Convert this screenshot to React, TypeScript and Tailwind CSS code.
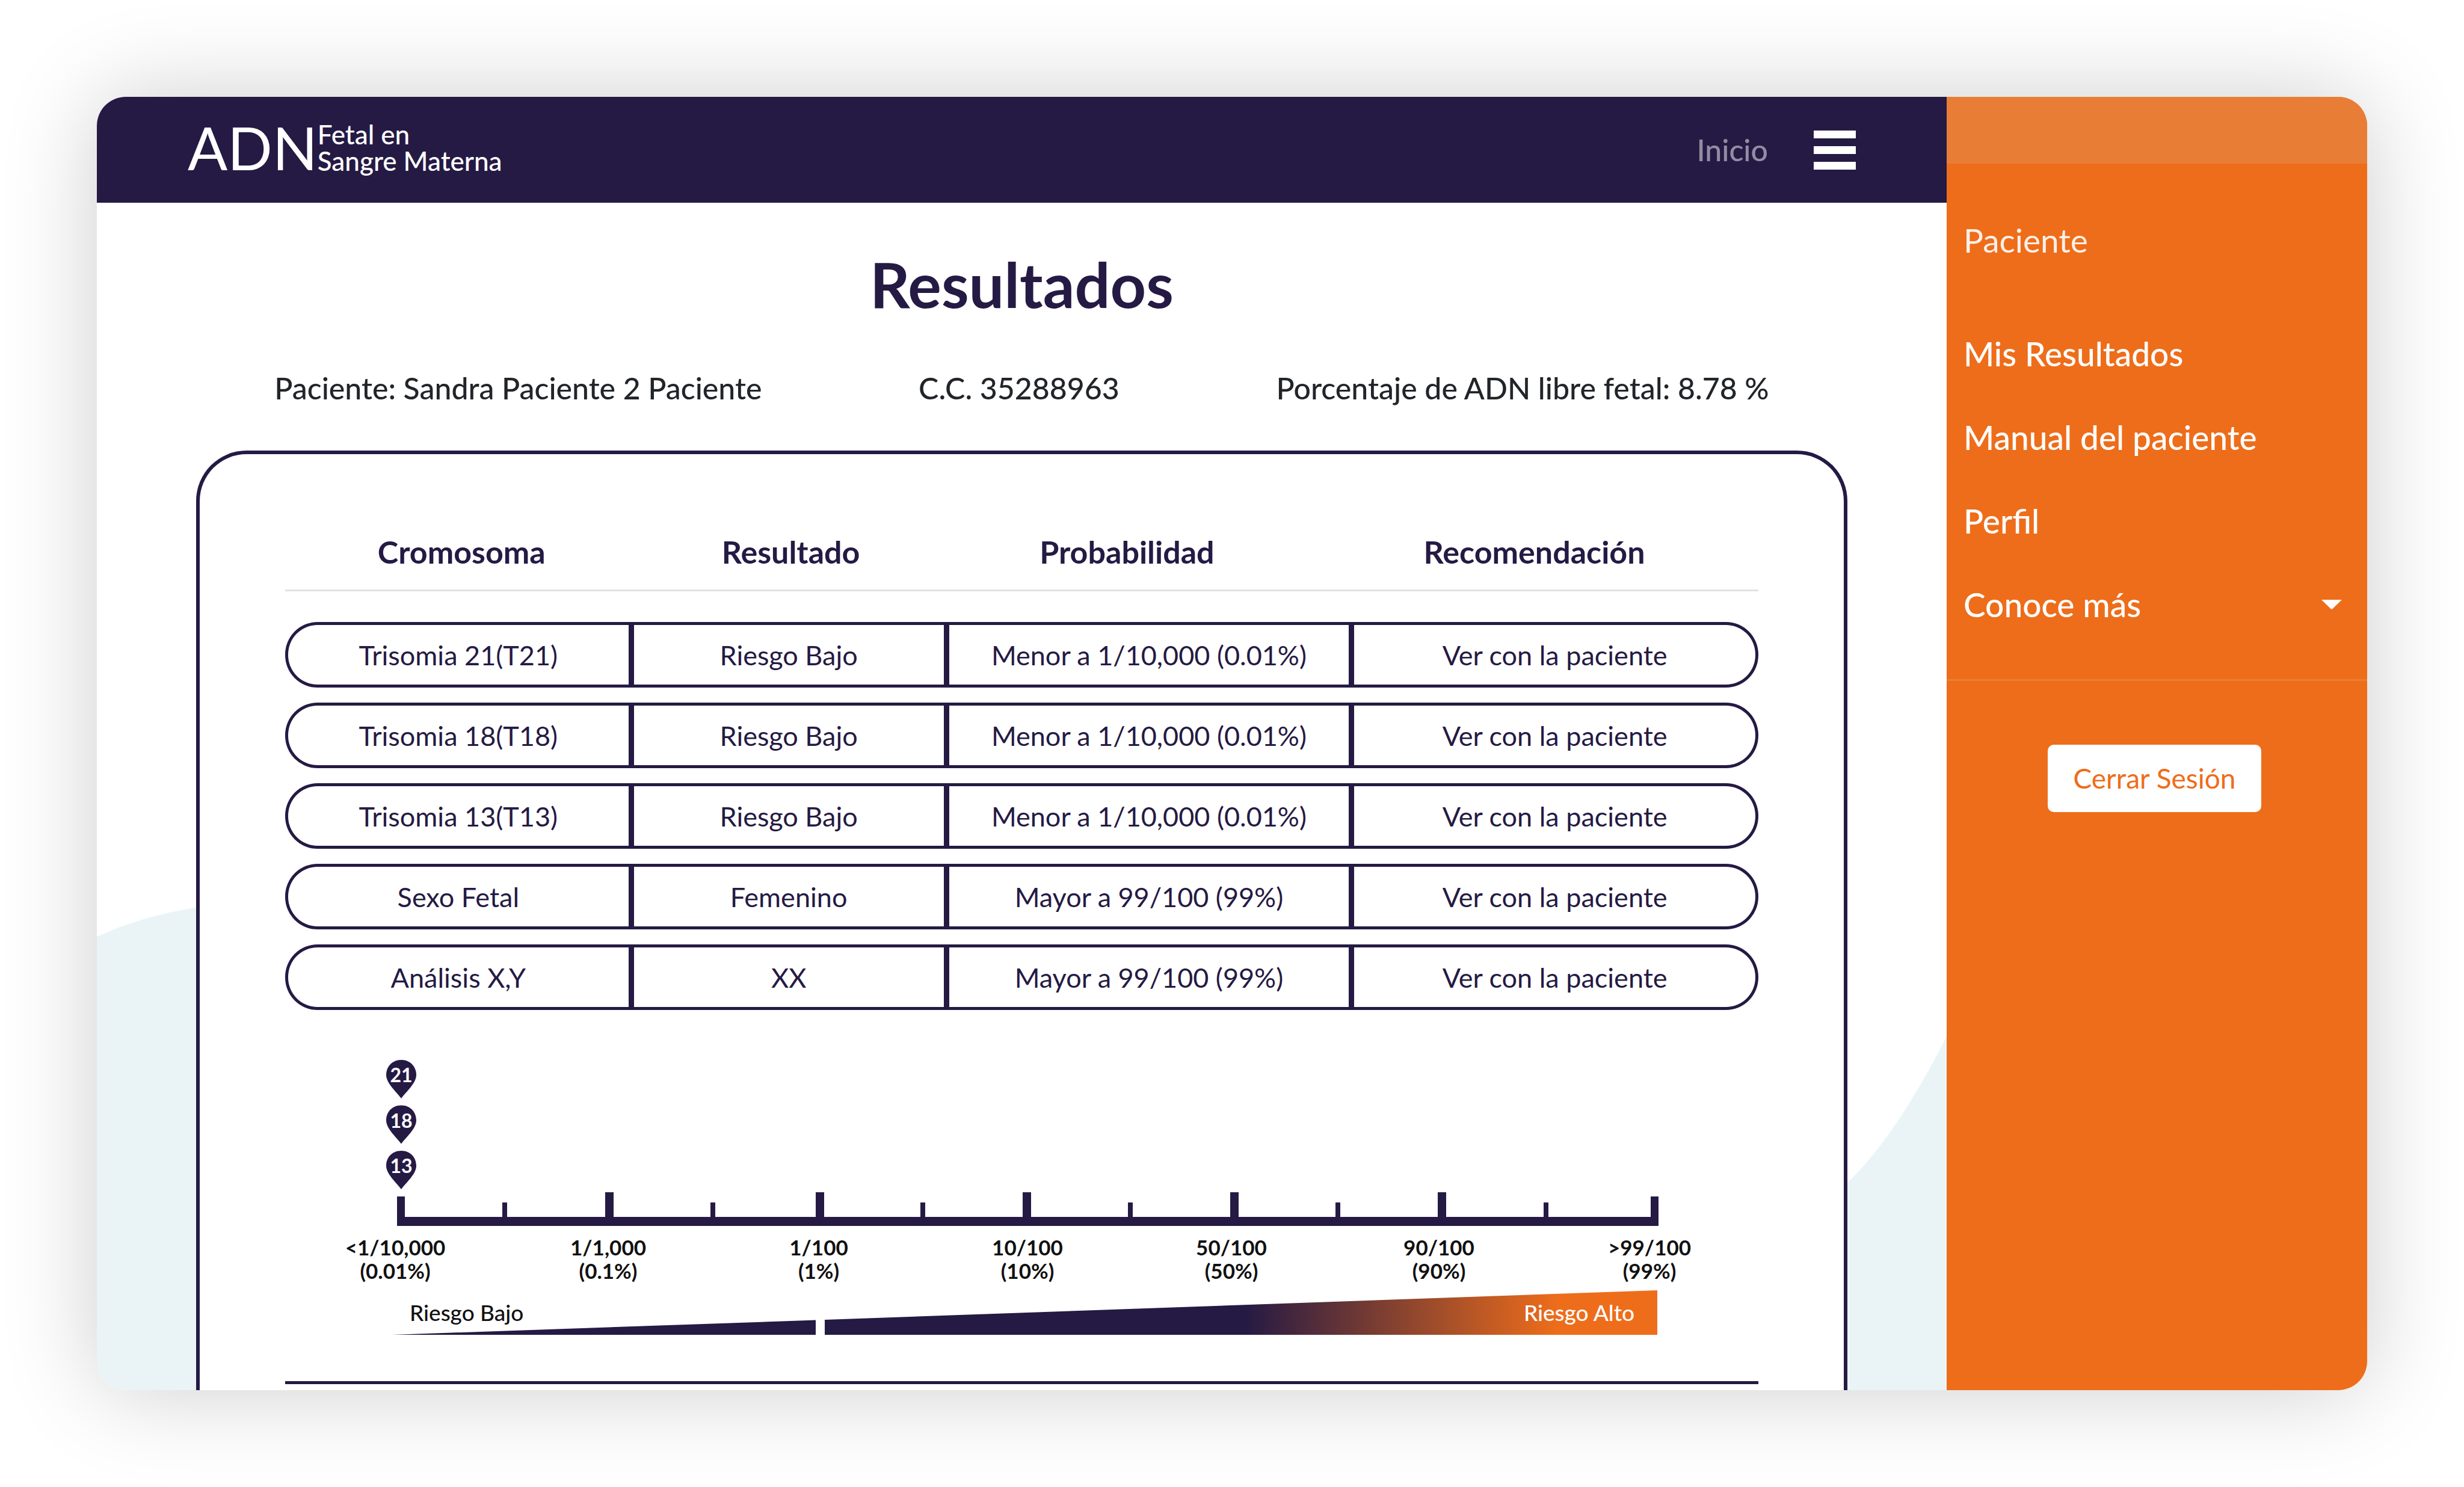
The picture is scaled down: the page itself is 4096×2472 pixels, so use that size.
const results = [
  ["Trisomia 21(T21)", "Riesgo Bajo", "Menor a 1/10,000 (0.01%)", "Ver con la paciente"],
  ["Trisomia 18(T18)", "Riesgo Bajo", "Menor a 1/10,000 (0.01%)", "Ver con la paciente"],
  ["Trisomia 13(T13)", "Riesgo Bajo", "Menor a 1/10,000 (0.01%)", "Ver con la paciente"],
  ["Sexo Fetal", "Femenino", "Mayor a 99/100 (99%)", "Ver con la paciente"],
  ["Análisis X,Y", "XX", "Mayor a 99/100 (99%)", "Ver con la paciente"],
];

const columns = [
  { label: "Cromosoma", layout: "w-[23.3%] pl-4" },
  { label: "Resultado", layout: "w-[21.4%] pl-4" },
  { label: "Probabilidad", layout: "w-[27.5%] pr-16" },
  { label: "Recomendación", layout: "w-[27.8%] pr-16" },
];

const links = ["Mis Resultados", "Manual del paciente", "Perfil"];

const pins = ["21", "18", "13"];
const majorTicks = [539, 889, 1233, 1578, 1923];
const minorTicks = [365, 711, 1060, 1405, 1750, 2096];
const scaleLabels = [
  { x: 183, odds: "<1/10,000", percent: "(0.01%)" },
  { x: 537, odds: "1/1,000", percent: "(0.1%)" },
  { x: 887, odds: "1/100", percent: "(1%)" },
  { x: 1234, odds: "10/100", percent: "(10%)" },
  { x: 1573, odds: "50/100", percent: "(50%)" },
  { x: 1918, odds: "90/100", percent: "(90%)" },
  { x: 2268, odds: ">99/100", percent: "(99%)" },
];

function Header() {
  return (
    <header className="relative flex h-[176px] shrink-0 items-center justify-between bg-[#251a44] px-[151px] text-white">
      <a href="#" className="flex items-center pb-2">
        <span className="text-[98px] leading-[98px]">ADN</span>
        <span className="flex flex-col text-[44px] leading-[44px] font-medium">
          <span>Fetal en</span>
          <span>Sangre Materna</span>
        </span>
      </a>
      <nav className="flex items-center gap-[76px]">
        <a href="#" className="text-[50px] leading-[60px] font-medium text-white/50">
          Inicio
        </a>
        <button type="button" aria-label="Menú" className="flex flex-col gap-[13px]">
          <span className="h-[13px] w-[70px] bg-white" />
          <span className="h-[13px] w-[70px] bg-white" />
          <span className="h-[13px] w-[70px] bg-white" />
        </button>
      </nav>
    </header>
  );
}

function ResultsTable() {
  return (
    <table className="w-full table-fixed border-separate border-spacing-x-0 border-spacing-y-[25px] text-center text-[#251a44]">
      <thead>
        <tr>
          {columns.map((c) => (
            <th
              key={c.label}
              scope="col"
              className={`${c.layout} border-b-[3px] border-[#dee2e6] pb-[33px] text-[52px] leading-[60px] font-bold`}
            >
              {c.label}
            </th>
          ))}
        </tr>
      </thead>
      <tbody className="before:block before:h-px before:content-['']">
        {results.map((row) => (
          <tr key={row[0]}>
            {row.map((cell, i) => (
              <td
                key={i}
                className="h-[109px] border-y-[5px] border-l-[9px] border-[#251a44] text-[45px] leading-[56px] first:rounded-l-[54px] first:border-l-[5px] last:rounded-r-[54px] last:border-r-[5px]"
              >
                {cell}
              </td>
            ))}
          </tr>
        ))}
      </tbody>
    </table>
  );
}

function RiskScale() {
  return (
    <svg viewBox="0 0 2449 592" className="block w-full" role="img" aria-label="Escala de riesgo">
      <defs>
        <linearGradient id="risk" gradientUnits="userSpaceOnUse" x1="1595" y1="0" x2="2116" y2="0">
          <stop offset="0" stopColor="#251a44" />
          <stop offset="1" stopColor="#ee6d1a" />
        </linearGradient>
      </defs>

      {pins.map((pin, i) => (
        <g key={pin} transform={`translate(193 ${58 + i * 75.5})`}>
          <path d="M0 0C15 0 25 11 25 25C25 39 8 53 0 64C-8 53 -25 39 -25 25C-25 11 -15 0 0 0Z" fill="#251a44" />
          <text y="37" textAnchor="middle" fill="#fff" className="text-[32px] font-bold">
            {pin}
          </text>
        </g>
      ))}

      <g fill="#251a44">
        <rect x="186" y="319" width="2097" height="15" />
        <rect x="186" y="285" width="13" height="49" />
        <rect x="2270" y="285" width="13" height="49" />
        {majorTicks.map((x) => (
          <rect key={x} x={x - 7} y="278" width="14" height="50" />
        ))}
        {minorTicks.map((x) => (
          <rect key={x} x={x - 4} y="295" width="8" height="30" />
        ))}
      </g>

      <g textAnchor="middle" fill="#111" className="text-[35px] font-bold">
        {scaleLabels.map((l) => (
          <text key={l.odds} y="383">
            <tspan x={l.x}>{l.odds}</tspan>
            <tspan x={l.x} dy="39">
              {l.percent}
            </tspan>
          </text>
        ))}
      </g>

      <path d="M178 515L882 490.500V515H178Z" fill="#251a44" />
      <path d="M897 490L2281 441V515H897Z" fill="url(#risk)" />
      <text x="207" y="492" fill="#111" className="text-[37px] font-medium">
        Riesgo Bajo
      </text>
      <text x="2243" y="492" textAnchor="end" fill="#fff" className="text-[37px] font-medium">
        Riesgo Alto
      </text>
    </svg>
  );
}

function Sidebar() {
  return (
    <aside className="flex w-[699px] shrink-0 flex-col bg-[#ee6d1a] text-[55px] leading-[64px] text-white">
      <div className="h-[111px] bg-[#e87e35]" />
      <div className="flex h-[246px] items-center px-7 pt-2 text-white/90">Paciente</div>
      <nav className="flex flex-col font-medium">
        {links.map((label) => (
          <a key={label} href="#" className="flex h-[139px] items-center px-7">
            {label}
          </a>
        ))}
        <button type="button" className="flex h-[139px] items-center justify-between pr-[42px] pl-7">
          Conoce más
          <svg viewBox="0 0 34 16" className="h-4 w-[34px]" fill="currentColor" aria-hidden="true">
            <path d="M0 0H34L18.500 15Q17 16 15.500 15Z" />
          </svg>
        </button>
      </nav>
      <div className="mt-[55px] h-[3px] bg-[#e87e35]" />
      <button
        type="button"
        className="mt-[106px] mr-2 h-28 w-[355px] self-center rounded-[10px] bg-white text-[46px] leading-[56px] text-[#ee6d1a]"
      >
        Cerrar Sesión
      </button>
    </aside>
  );
}

export default function App() {
  return (
    <div className="h-screen overflow-hidden bg-white p-[161px] font-['Lato',sans-serif]">
      <div className="flex h-full overflow-hidden rounded-[48px] bg-white shadow-[0_0_160px_rgba(0,0,0,0.2)]">
        <div className="relative flex min-w-0 flex-1 flex-col">
          <svg
            viewBox="0 0 3075 1973"
            preserveAspectRatio="none"
            className="absolute inset-x-0 bottom-0 h-[1973px] w-full"
            aria-hidden="true"
          >
            <path
              d="M0 1219Q90 1178 200 1166C1200 1100 2200 2200 2910 1628Q2990 1552 3075 1385V1973H0Z"
              fill="#eaf4f6"
            />
          </svg>
          <Header />
          <main className="relative flex min-h-0 flex-1 flex-col px-[165px] pt-[75px]">
            <h1 className="text-center text-[104px] leading-[120px] font-bold text-[#251a44]">Resultados</h1>
            <div className="mt-[83px] flex justify-around text-[50px] leading-[60px] font-medium text-[#212529]">
              <p>Paciente: Sandra Paciente 2 Paciente</p>
              <p>C.C. 35288963</p>
              <p>Porcentaje de ADN libre fetal: 8.78 %</p>
            </div>
            <section className="mt-[74px] flex-1 rounded-t-[84px] border-6 border-b-0 border-[#251a44] bg-white px-[142px] pt-[107px]">
              <ResultsTable />
              <RiskScale />
              <hr className="border-t-[5px] border-[#251a44]" />
            </section>
          </main>
        </div>
        <Sidebar />
      </div>
    </div>
  );
}
